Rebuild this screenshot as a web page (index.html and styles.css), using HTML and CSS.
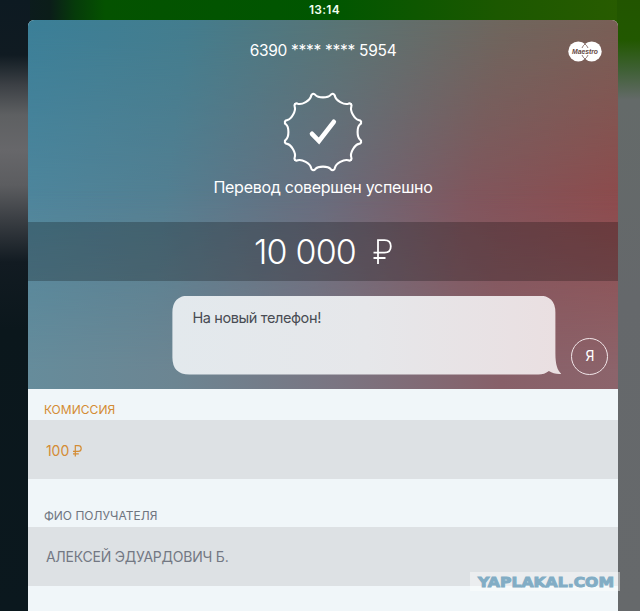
FILE: index.html
```html
<!DOCTYPE html>
<html lang="ru">
<head>
<meta charset="utf-8">
<title>Перевод</title>
<link rel="stylesheet" href="styles.css">
</head>
<body>
<div class="screen">
  <header class="status">13:14</header>
  <main class="card">
    <section class="hero">
      <div class="top">
        <div class="number">6390 **** **** 5954</div>
        <svg class="maestro" width="34" height="21" viewBox="0 0 34 21">
          <circle cx="10.3" cy="10.4" r="10" fill="#fff"/>
          <circle cx="23.7" cy="10.4" r="10" fill="#fff"/>
          <path d="M17 3a10 10 0 0 0-3 4M17 3a10 10 0 0 1 3 4M14 14a10 10 0 0 0 3 4M20 14a10 10 0 0 1-3 4" fill="none" stroke="#7a5c56" stroke-width=".8"/>
          <text x="17" y="12.6" text-anchor="middle" textLength="26" lengthAdjust="spacingAndGlyphs" class="brand">Maestro</text>
        </svg>
        <svg class="badge" width="84" height="84" viewBox="-42 -42 84 84">
          <defs><path id="wave" d="M-10.2-38.1Q-8.7-38.5-7.7-37.1Q-5.6-34.6 0-34.6Q5.6-34.6 7.7-37.1Q8.7-38.5 10.2-38.1"/></defs>
          <g fill="none" stroke="#fff" stroke-width="2.1" stroke-linecap="round">
            <use href="#wave"/><use href="#wave" transform="rotate(30)"/><use href="#wave" transform="rotate(60)"/>
            <use href="#wave" transform="rotate(90)"/><use href="#wave" transform="rotate(120)"/><use href="#wave" transform="rotate(150)"/>
            <use href="#wave" transform="rotate(180)"/><use href="#wave" transform="rotate(210)"/><use href="#wave" transform="rotate(240)"/>
            <use href="#wave" transform="rotate(270)"/><use href="#wave" transform="rotate(300)"/><use href="#wave" transform="rotate(330)"/>
          </g>
          <path d="M-11 1.8L-4 9L10.8-10.2" fill="none" stroke="#fff" stroke-width="4.6" stroke-linecap="round" stroke-linejoin="miter"/>
        </svg>
        <h1 class="title">Перевод совершен успешно</h1>
      </div>
      <div class="amount"><span>10 000</span><svg width="19" height="26" viewBox="0 0 19 26"><path d="M5 25V1.2H11.5C15.8 1.2 17.8 3.8 17.8 7.3S15.8 13.7 11.5 13.7M.5 13.7H11.5M.5 19H12.5" fill="none" stroke="#fff" stroke-width="1.8"/></svg></div>
      <div class="message">
        <div class="bubble">На новый телефон!</div>
        <div class="avatar">Я</div>
      </div>
    </section>
    <section class="details">
      <h2 class="label fee">КОМИССИЯ</h2>
      <div class="value fee"><span class="sum">100</span><svg width="9" height="12" viewBox="0 0 9 12"><path d="M2.3 11.5V.7H5.2C7.3.7 8.2 1.9 8.2 3.5S7.3 6.4 5.2 6.4M0 6.4H5.2M0 8.8H5.8" fill="none" stroke="currentColor" stroke-width="1.2"/></svg></div>
      <h2 class="label name-label">ФИО ПОЛУЧАТЕЛЯ</h2>
      <div class="value name">АЛЕКСЕЙ ЭДУАРДОВИЧ Б.</div>
    </section>
  </main>
  <div class="watermark"><svg width="150" height="19" viewBox="0 0 150 19"><text x="8" y="14.6" textLength="136" lengthAdjust="spacingAndGlyphs">YAPLAKAL.COM</text></svg></div>
</div>
</body>
</html>
```
FILE: styles.css
```css
* { box-sizing: border-box; }
body { margin: 0; font-family: Inter, "Open Sans", sans-serif; }
.screen {
  position: relative;
  width: 640px;
  height: 611px;
  overflow: hidden;
  padding: 0 22.4px 0 28.4px;
  background:
    linear-gradient(to bottom, #225500 0, #225800 40px, #3f6035 70px, #646a69 100px, #65686b 300px, #66696b) right / 23px 100% no-repeat,
    linear-gradient(to bottom, #0d1a22 0, #101b22 55px, #3c4045 85px, #5e6062 115px, #67676a 150px, #5c5d60 185px, #3a3e43 220px, #121b22 262px, #0b171c 330px, #0b181e) left / 30px 100% no-repeat,
    linear-gradient(to right, #0d1a22 0, #0b1d19 50px, #063b0a 75px, #045200 105px, #005600 330px, #1c5800 500px, #2a5c00);
}
.status {
  height: 20px;
  padding-left: 3px;
  color: #f2fff0;
  font-size: 12px;
  font-weight: 600;
  line-height: 20px;
  letter-spacing: .3px;
  text-align: center;
}
.card {
  height: 600px;
  border-radius: 6px 6px 0 0;
  overflow: hidden;
  background: #f0f6f9;
}
.hero {
  position: relative;
  isolation: isolate;
  height: 369px;
  color: #fff;
  background: linear-gradient(97deg, #3b7f98 0, #437d8e 25%, #5a7474 50%, #6f665d 75%, #7d5d54 100%);
}
.hero::before, .hero::after {
  content: "";
  position: absolute;
  inset: 0;
  z-index: -1;
}
.hero::before {
  background: linear-gradient(97deg, #4e879e 0, #547f92 25%, #696c7d 50%, #81555d 73%, #904849 100%);
  mask-image: linear-gradient(to bottom, transparent 0, #000 190px);
}
.hero::after {
  background: linear-gradient(90deg, #668c9b 0, #6c8592 25%, #7a7582 52%, #876069 80%, #8c646b 100%);
  mask-image: linear-gradient(to bottom, transparent 170px, #000 350px);
}
.top {
  position: relative;
  height: 202px;
  display: flex;
  flex-direction: column;
  align-items: center;
}
.number { margin-top: 21px; font-size: 15.5px; line-height: 20px; letter-spacing: -.29px; white-space: nowrap; }
.maestro { position: absolute; right: 15.5px; top: 21px; }
.brand { font: italic 700 7.5px "Liberation Sans", sans-serif; fill: #65483f; }
.badge { margin-top: 29px; flex: none; }
.title { margin: 3px 0 0; font-size: 16px; font-weight: 380; line-height: 20px; letter-spacing: -.27px; white-space: nowrap; }
.amount {
  height: 59px;
  display: flex;
  align-items: center;
  justify-content: center;
  gap: 17px;
  background: rgba(0, 0, 0, .24);
  font-size: 34px;
  font-weight: 350;
  line-height: 59px;
  letter-spacing: -.8px;
}
.message { display: flex; align-items: flex-end; gap: 10px; padding: 14.5px 10px 0 144px; }
.bubble {
  flex: 0 0 389px;
  height: 79px;
  padding: 12px 20px;
  background: linear-gradient(90deg, #e3e9ed, #e6e7ea 50%, #eadfe1);
  clip-path: path("M17 0H366Q383 0 383 17V58C383 69 385 75 389 78.5C384 79 380 77.5 376.5 75.5Q372 79 366 79H17Q0 79 0 62V17Q0 0 17 0Z");
  color: #484c53;
  font-size: 14.5px;
  line-height: 20px;
  letter-spacing: -.38px;
}
.avatar {
  flex: none;
  width: 37px;
  height: 37px;
  border: 1.3px solid #f1e5e8;
  border-radius: 50%;
  font-size: 14px;
  line-height: 34px;
  text-align: center;
}
.label { margin: 0; height: 31px; padding: 12px 0 0 15.5px; color: #6f7580; font-size: 12px; font-weight: 400; line-height: 18px; letter-spacing: .05px; }
.value { height: 59px; padding: 2px 0 0 17.5px; display: flex; align-items: center; background: #dde1e4; color: #737883; font-size: 14px; }
.fee { color: #d48c34; }
.value.fee { gap: 4px; }
.name-label { height: 47.5px; padding-top: 28px; letter-spacing: 0; }
.name { letter-spacing: -.23px; padding-top: 1px; }
.watermark { position: absolute; left: 470px; top: 572px; width: 150px; height: 19px; background: rgba(255, 255, 255, .42); }
.watermark svg { display: block; }
.watermark text { font: 700 14.5px "DejaVu Sans", sans-serif; fill: #82adc5; stroke: #82adc5; stroke-width: 1px; }
```
